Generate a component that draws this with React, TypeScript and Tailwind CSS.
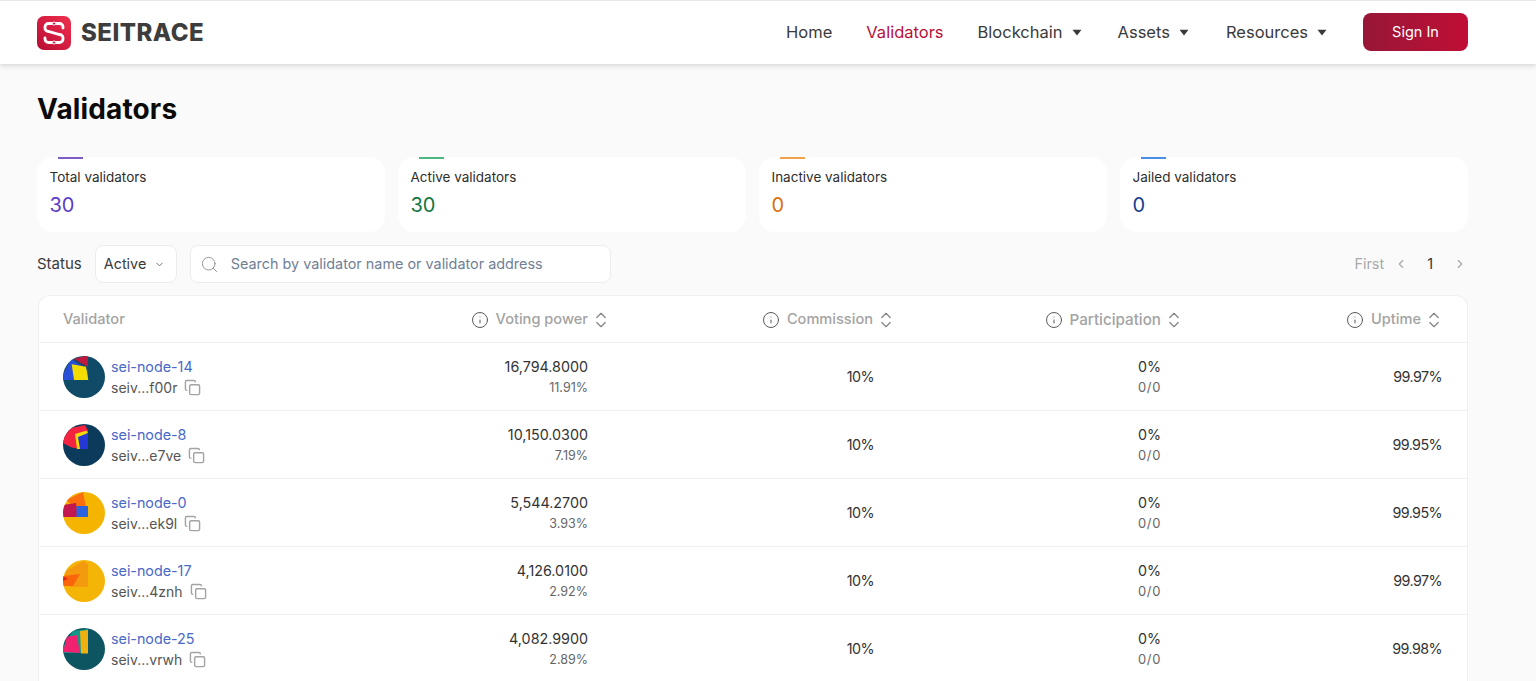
import { ChevronDown, ChevronLeft, ChevronRight, ChevronsUpDown, Copy, Info, Search } from "lucide-react";

type Shape = { points: string; fill: string };

interface Validator {
  name: string;
  address: string;
  power: string;
  share: string;
  uptime: string;
  base: string;
  shapes: Shape[];
}

const validators: Validator[] = [
  {
    name: "sei-node-14",
    address: "seiv...f00r",
    power: "16,794.8000",
    share: "11.91%",
    uptime: "99.97%",
    base: "#0f4a66",
    shapes: [
      { points: "0,19 8,3 25,14 25,24 0,24", fill: "#2b50d8" },
      { points: "11,3 25,-1 25,11", fill: "#c0173f" },
      { points: "8.7,8.3 23,10.7 25.3,24 11,24", fill: "#f5dc00" },
    ],
  },
  {
    name: "sei-node-8",
    address: "seiv...e7ve",
    power: "10,150.0300",
    share: "7.19%",
    uptime: "99.95%",
    base: "#0c3a5a",
    shapes: [
      { points: "-1,18.5 3.7,5 22,1 25,6.7 17,25 8.7,23.4", fill: "#f4233f" },
      { points: "12,10 23,6.7 25,8 17,25 14,25", fill: "#f5d90a" },
      { points: "15,13 25,9 25,25 17,25", fill: "#2438d8" },
    ],
  },
  {
    name: "sei-node-0",
    address: "seiv...ek9l",
    power: "5,544.2700",
    share: "3.93%",
    uptime: "99.95%",
    base: "#f4b400",
    shapes: [
      { points: "3,8 20,0 25,25 10,14", fill: "#fb6f0c" },
      { points: "0,13 13,11 15,25 0,25", fill: "#c2184f" },
      { points: "13.5,14 25,14 25,25 13.5,25", fill: "#2b63df" },
    ],
  },
  {
    name: "sei-node-17",
    address: "seiv...4znh",
    power: "4,126.0100",
    share: "2.92%",
    uptime: "99.97%",
    base: "#f5b506",
    shapes: [
      { points: "3,11 20,1 25,4 25,27 8,27 0,24", fill: "#f39a0e" },
      { points: "0,16 17,14 10,26 0,26", fill: "#fb660c" },
      { points: "0,16 5,19 0,21", fill: "#e5260f" },
    ],
  },
  {
    name: "sei-node-25",
    address: "seiv...vrwh",
    power: "4,082.9900",
    share: "2.89%",
    uptime: "99.98%",
    base: "#0d5560",
    shapes: [
      { points: "0,19 10,3 25,1 25,25 0,25", fill: "#0f9a8c" },
      { points: "0,24 3.7,9 13.7,7 17,25", fill: "#f0226f" },
      { points: "17,3 25,2 25,25.5 18,25.5", fill: "#f0b010" },
    ],
  },
];

function Caret() {
  return (
    <svg width="10" height="7" viewBox="0 0 10 7" className="ml-[9px]">
      <path d="M0.5 0.8h9L5 6.4z" fill="#3a3a3a" />
    </svg>
  );
}

function Logo() {
  return (
    <svg width="34" height="34" viewBox="0 0 34 34">
      <defs>
        <linearGradient id="logoFill" x1="0" y1="1" x2="1" y2="0">
          <stop offset="0" stopColor="#b80b33" />
          <stop offset="1" stopColor="#f0304f" />
        </linearGradient>
      </defs>
      <rect width="34" height="34" rx="7" fill="url(#logoFill)" />
      <path
        d="M26 12V11a3.5 3.5 0 0 0-3.5-3.5H11.5A3.5 3.5 0 0 0 8 11v1a3.5 3.5 0 0 0 3.5 3.5l11 3a3.5 3.5 0 0 1 3.5 3.5v1a3.5 3.5 0 0 1-3.5 3.5H11.5A3.5 3.5 0 0 1 8 23v-1"
        fill="none"
        stroke="#fff"
        strokeWidth="2.8"
        strokeLinecap="round"
      />
      <circle cx="17" cy="7.5" r="1.6" fill="#d81d42" stroke="#fff" strokeWidth="0.8" />
      <circle cx="17" cy="26.5" r="1.6" fill="#d81d42" stroke="#fff" strokeWidth="0.8" />
    </svg>
  );
}

function Avatar({ base, shapes }: { base: string; shapes: Shape[] }) {
  return (
    <div className="h-[42px] w-[42px] shrink-0 overflow-hidden rounded-full">
      <svg width="42" height="42" viewBox="0 0 42 42">
        <rect width="42" height="42" fill={base} />
        {shapes.map((s) => (
          <polygon key={s.points} points={s.points} fill={s.fill} />
        ))}
      </svg>
    </div>
  );
}

function StatCard({ label, value, accent, color }: { label: string; value: string; accent: string; color: string }) {
  return (
    <div className="relative h-[75px] rounded-2xl bg-white pl-[12.5px] pt-[12px]">
      <div className={`absolute left-[21px] top-0 h-[2px] w-[25px] ${accent}`} />
      <div className="text-[13.5px] leading-[17px] text-[#2e2e2e]">{label}</div>
      <div className={`mt-[7px] text-[20px] leading-[24px] ${color}`}>{value}</div>
    </div>
  );
}

function HeaderCell({ label, className }: { label: string; className?: string }) {
  return (
    <div className="flex items-center justify-end">
      <Info size={18} strokeWidth={1.3} className="mr-[7px] text-[#555]" />
      <span className={className}>{label}</span>
      <ChevronsUpDown size={20} strokeWidth={1.6} className="-mr-[4px] ml-[3px] text-[#888]" />
    </div>
  );
}

export default function App() {
  return (
    <div className="h-screen overflow-hidden bg-[#fafafa] font-['Inter',sans-serif]">
      <header className="flex h-[64px] items-center justify-between border-t border-[#e8e8e8] bg-white pl-[37px] pr-[68px] shadow-[0_2px_5px_rgba(0,0,0,0.14)]">
        <div className="flex items-center gap-[10px]">
          <Logo />
          <span className="text-[24px] font-extrabold leading-none tracking-[0.02em] text-[#3d3d3d]">SEITRACE</span>
        </div>
        <nav className="flex items-center text-[16.5px] text-[#3a3a3a]">
          <a>Home</a>
          <a className="ml-[34px] text-[#b9103a]">Validators</a>
          <a className="ml-[34px] flex items-center">
            Blockchain
            <Caret />
          </a>
          <a className="ml-[36px] flex items-center">
            Assets
            <Caret />
          </a>
          <a className="ml-[37px] flex items-center">
            Resources
            <Caret />
          </a>
          <button className="mb-[2px] ml-[36px] h-[38px] w-[105px] rounded-lg bg-gradient-to-r from-[#971637] to-[#c00d35] text-[14.5px] text-white">
            Sign In
          </button>
        </nav>
      </header>

      <main className="px-[37px] pr-[68px]">
        <h1 className="mt-[27px] text-[28px] font-bold leading-[36px] tracking-[0.005em] text-[#0b0b0b]">Validators</h1>

        <div className="mt-[30px] grid grid-cols-4 gap-[13px]">
          <StatCard label="Total validators" value="30" accent="bg-[#7d5cc7]" color="text-[#5b3cc4]" />
          <StatCard label="Active validators" value="30" accent="bg-[#4cb782]" color="text-[#12763f]" />
          <StatCard label="Inactive validators" value="0" accent="bg-[#f0a24a]" color="text-[#d96f0c]" />
          <StatCard label="Jailed validators" value="0" accent="bg-[#4a90e2]" color="text-[#17418f]" />
        </div>

        <div className="mt-[13px] flex h-[38px] items-center text-[14.4px]">
          <span className="text-[15px] text-[#3a3a3a]">Status</span>
          <div className="ml-[13px] flex h-[38px] w-[82px] items-center rounded-lg border border-[#ececec] bg-white pl-[8px] text-[#3a3a3a]">
            Active
            <ChevronDown size={11} className="ml-[8px] text-[#666]" />
          </div>
          <div className="ml-[13px] flex h-[38px] w-[421px] items-center rounded-lg border border-[#ececec] bg-white pl-[9px] text-[#718096]">
            <Search size={19} strokeWidth={1.1} className="text-[#888]" />
            <span className="ml-[12px]">Search by validator name or validator address</span>
          </div>
          <div className="ml-auto flex items-center pr-[1px] text-[#a8a8a8]">
            <span>First</span>
            <ChevronLeft size={14} className="ml-[10px]" />
            <span className="ml-[19px] text-[#333]">1</span>
            <ChevronRight size={14} className="ml-[20px]" />
          </div>
        </div>

        <div className="ml-px mt-[12px] rounded-t-xl border border-b-0 border-[#f0f0f0] bg-white">
          <div className="grid h-[47px] grid-cols-[300px_244px_285px_288px_262px] items-center border-b border-[#f0f0f0] pl-[24px] pt-[2px] text-[14.6px] font-medium text-[#a3a3a3]">
            <div>Validator</div>
            <HeaderCell label="Voting power" />
            <HeaderCell label="Commission" />
            <HeaderCell label="Participation" className="text-[15.2px]" />
            <div className="pr-[2px]">
              <HeaderCell label="Uptime" />
            </div>
          </div>
          {validators.map((v) => (
            <div
              key={v.name}
              className="grid h-[68px] grid-cols-[300px_244px_285px_288px_262px] items-center border-b border-[#f0f0f0] pl-[24px] text-[14.3px] text-[#333]"
            >
              <div className="flex items-center">
                <Avatar base={v.base} shapes={v.shapes} />
                <div className="ml-[6px] leading-[21px]">
                  <div className="text-[#4a68c8]">{v.name}</div>
                  <div className="flex items-center text-[14px] text-[#555]">
                    {v.address}
                    <Copy size={17} strokeWidth={2} className="ml-[7px] text-[#a3a3a3]" />
                  </div>
                </div>
              </div>
              <div className="pr-[19px] text-right leading-[21px]">
                <div>{v.power}</div>
                <div className="text-[12.5px] text-[#666]">{v.share}</div>
              </div>
              <div className="pr-[18px] text-right tracking-[-0.04em]">10%</div>
              <div className="pr-[19px] text-right leading-[21px]">
                <div>0%</div>
                <div className="text-[13px] tracking-[0.05em] text-[#666]">0/0</div>
              </div>
              <div className="text-right tracking-[-0.04em]">{v.uptime}</div>
            </div>
          ))}
        </div>
      </main>
    </div>
  );
}
